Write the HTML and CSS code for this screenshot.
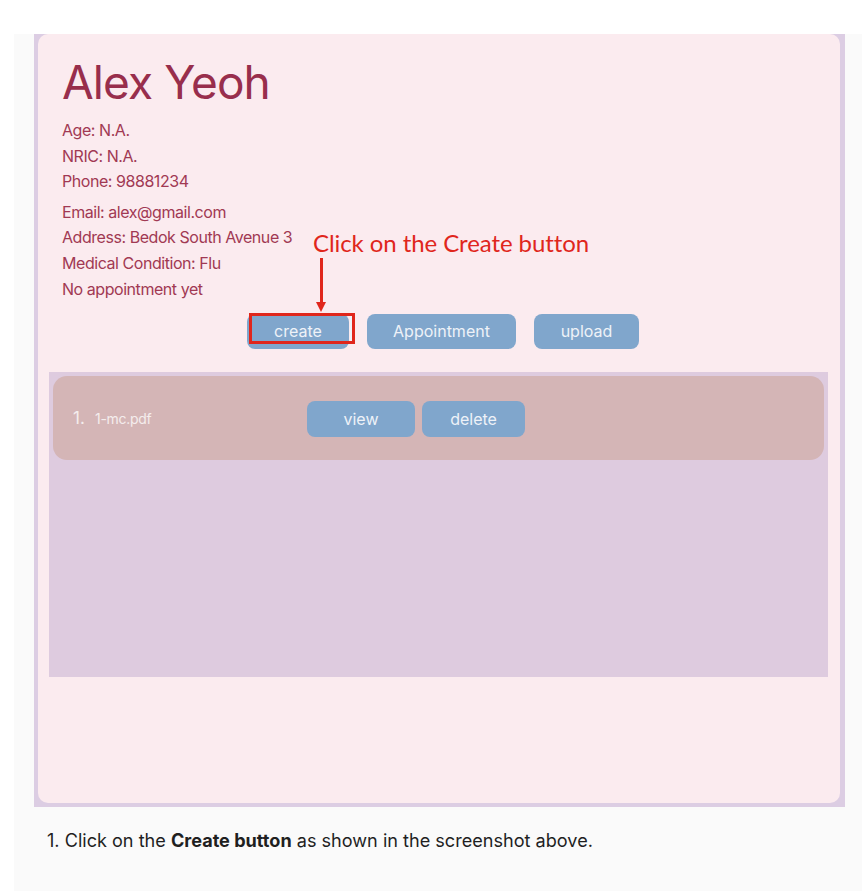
FILE: index.html
```html
<!DOCTYPE html>
<html>
<head>
<meta charset="utf-8">
<link rel="stylesheet" href="styles.css">
</head>
<body>
<div class="doc">
  <div class="shot">
    <div class="card">
      <h1 class="name">Alex Yeoh</h1>
      <div class="info">
        <div class="group">
          <div>Age: N.A.</div>
          <div>NRIC: N.A.</div>
          <div>Phone: 98881234</div>
        </div>
        <div class="group">
          <div>Email: alex@gmail.com</div>
          <div>Address: Bedok South Avenue 3</div>
          <div>Medical Condition: Flu</div>
          <div>No appointment yet</div>
        </div>
      </div>
      <div class="actions">
        <div class="btn btn-create">create</div>
        <div class="btn btn-appt">Appointment</div>
        <div class="btn btn-upload">upload</div>
        <div class="note">Click on the Create button</div>
        <div class="arrow"></div>
        <div class="highlight"></div>
      </div>
      <div class="files">
        <div class="file-row">
          <span class="idx">1.</span>
          <span class="fname">1-mc.pdf</span>
          <div class="file-btns">
            <div class="btn btn-view">view</div>
            <div class="btn btn-delete">delete</div>
          </div>
        </div>
      </div>
    </div>
  </div>
  <p class="step">1. Click on the <b>Create button</b> as shown in the screenshot above.</p>
</div>
</body>
</html>
```
FILE: styles.css
```css
html, body {
  margin: 0;
  padding: 0;
  background: #ffffff;
}
body {
  font-family: Inter, "Noto Sans", sans-serif;
}
.doc {
  margin: 34px 0 0 14px;
  background: #fafafa;
  height: 857px;
  padding-left: 20px;
  box-sizing: border-box;
}
.shot {
  width: 811px;
  height: 773px;
  background: #dccde3;
  padding: 0 5px 4px 4px;
  box-sizing: border-box;
}
.card {
  height: 100%;
  background: #fbebef;
  border-radius: 10px;
  box-sizing: border-box;
  padding: 22px 0 0 0;
}
.name {
  margin: 0 0 0 24px;
  font-weight: 400;
  font-size: 46px;
  line-height: 52px;
  letter-spacing: -0.9px;
  color: #982e4c;
}
.info {
  margin: 10px 0 0 24px;
  font-size: 16px;
  line-height: 25.6px;
  color: #a13953;
  letter-spacing: -0.45px;
}
.group + .group {
  margin-top: 5px;
}
.actions {
  position: relative;
  display: flex;
  gap: 18px;
  padding-left: 209px;
  margin-top: 12px;
}
.btn {
  background: #80a6cc;
  color: #eef2f8;
  font-size: 16px;
  height: 35px;
  line-height: 35px;
  text-align: center;
  border-radius: 8px;
}
.btn-create { width: 102px; }
.btn-appt { width: 149px; }
.btn-upload { width: 105px; }
.note {
  position: absolute;
  left: 275px;
  top: -86px;
  font-family: Lato, "Noto Sans", sans-serif;
  font-size: 24px;
  letter-spacing: -0.08px;
  color: #e0261c;
  white-space: nowrap;
}
.arrow {
  position: absolute;
  left: 282px;
  top: -56px;
  width: 3px;
  height: 46px;
  background: #e0261c;
}
.arrow::after {
  content: "";
  position: absolute;
  left: -4px;
  top: 44px;
  border-left: 5.5px solid transparent;
  border-right: 5.5px solid transparent;
  border-top: 10px solid #e0261c;
}
.highlight {
  position: absolute;
  left: 211px;
  top: -1px;
  width: 100px;
  height: 25px;
  border: 3.5px solid #e0261c;
  box-shadow: inset -3px 0 0 -1px #eef2f8;
}
.files {
  margin: 23px 12px 0 11px;
  height: 305px;
  background: #decbdf;
  padding: 4px 4px 0 4px;
  box-sizing: border-box;
}
.file-row {
  height: 84px;
  background: #d4b5b6;
  border-radius: 14px;
  display: flex;
  align-items: center;
  padding-left: 20px;
  color: #f4eded;
}
.idx {
  font-size: 17px;
  width: 22px;
}
.fname {
  font-size: 14px;
  letter-spacing: -0.3px;
  width: 212px;
}
.file-btns {
  display: flex;
  gap: 7px;
  margin-top: 1px;
}
.btn-view { width: 108px; height: 36px; line-height: 36px; }
.btn-delete { width: 103px; height: 36px; line-height: 36px; }
.step {
  margin: 22px 0 0 13px;
  font-size: 18.1px;
  color: #1f1f1f;
  letter-spacing: 0;
}
.step b {
  font-weight: 700;
}
```
